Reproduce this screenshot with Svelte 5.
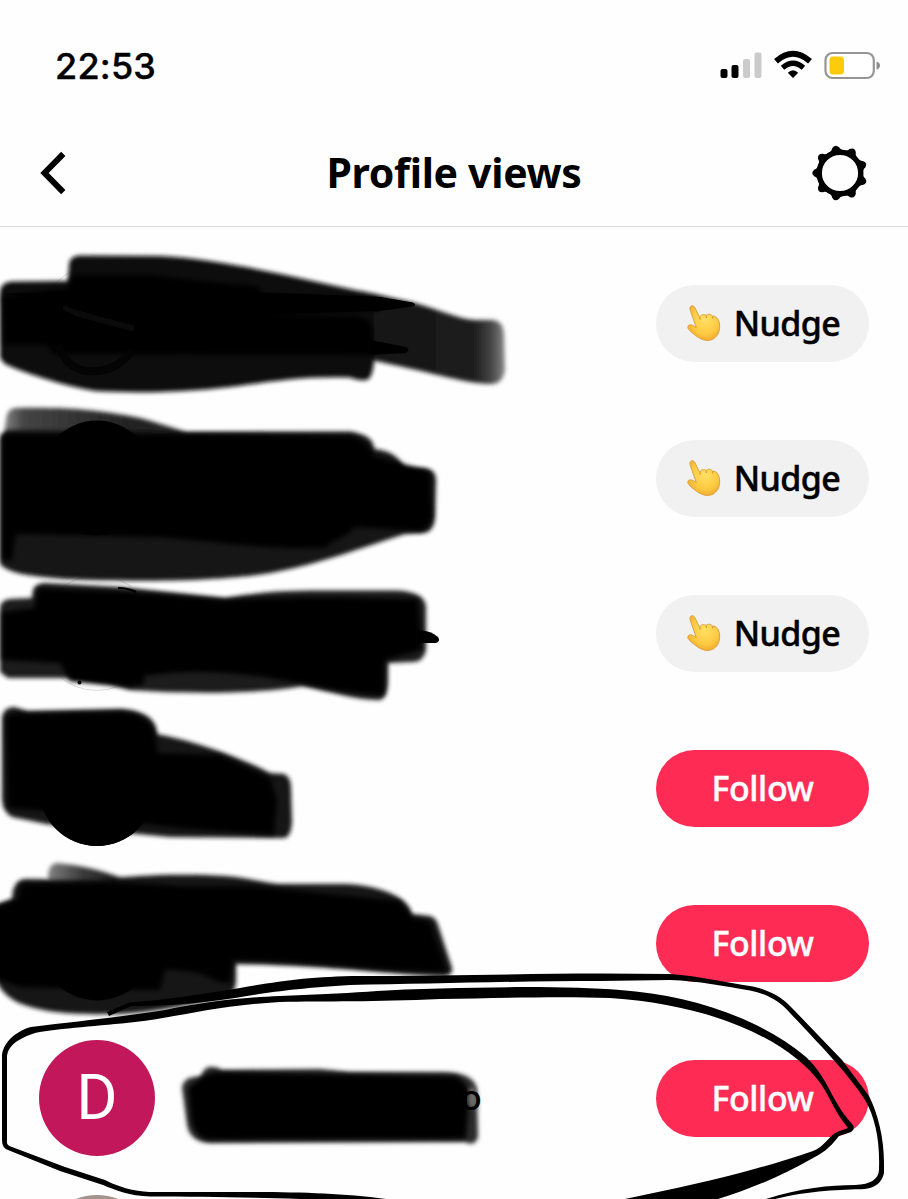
<script>
const rows = [
    { action: 'Nudge', avatar: 'pale' },
    { action: 'Nudge', avatar: 'dark' },
    { action: 'Nudge', avatar: 'pale' },
    { action: 'Follow', avatar: 'dark' },
    { action: 'Follow', avatar: 'dark' },
    { action: 'Follow', avatar: 'letter', initial: 'D', name: 'o' },
    { action: '', avatar: 'photo' }
];
const teeth = [0, 40, 80, 120, 160, 200, 240, 280, 320];
</script>

<div class="screen">
    <div class="status">
        <div class="clock">22:53</div>
        <svg class="status_icons" width="161" height="30" viewBox="0 0 161 30">
            <rect x="1.500" y="19" width="7" height="9" rx="2" fill="#000" />
            <rect x="12.500" y="15" width="7" height="13" rx="2" fill="#000" />
            <rect x="24" y="9" width="7" height="19" rx="2" fill="#cbcbcb" />
            <rect x="35.500" y="2.500" width="7" height="25.500" rx="2" fill="#cbcbcb" />
            <path d="M57 11.200Q74 -3.600 91 11.200" fill="none" stroke="#000" stroke-width="5.800" />
            <path d="M63.500 17.800Q74 8.600 84.500 17.800" fill="none" stroke="#000" stroke-width="5.200" />
            <path d="M68.800 22.800Q74 17.800 79.200 22.800L74 28Z" fill="#000" />
            <rect x="106.500" y="3" width="48.300" height="25" rx="7" fill="#fff" stroke="#959595" stroke-width="2.200" />
            <rect x="110.500" y="6.500" width="14.500" height="18" rx="3.500" fill="#fecb0b" />
            <path d="M157.500 11.500Q161 12.500 161 15.500T157.500 19.500Z" fill="#8d8d8d" />
        </svg>
    </div>
    <div class="header">
        <svg width="26" height="44" viewBox="0 0 26 44">
            <path d="M23.300 2.800L4.500 22L23.300 41.200" fill="none" stroke="#000" stroke-width="6" />
        </svg>
        <div class="title">Profile views</div>
        <svg width="58" height="58" viewBox="-29 -29 58 58">
            <circle r="20.800" fill="none" stroke="#000" stroke-width="5.400" />
            {#each teeth as angle}
            <path d="M-21 -8.500Q-23 -4 -25.500 -3.600Q-30 0 -25.500 3.600Q-23 4 -21 8.500Z" transform="rotate({angle})" />
            {/each}
        </svg>
    </div>
    <div class="list">
        {#each rows as row}
        <div class="row">
            <div class="avatar {row.avatar}">{row.initial ?? ''}</div>
            <div class="name">{row.name ?? ''}</div>
            {#if row.action === 'Nudge'}
            <button class="pill nudge">
                <svg class="hand" width="37" height="39" viewBox="0 0 37 39">
                    <defs>
                        <radialGradient id="skin" cx="0.55" cy="0.4" r="0.65">
                            <stop offset="0" stop-color="#ffe063" />
                            <stop offset="0.650" stop-color="#fdc941" />
                            <stop offset="1" stop-color="#f0a52c" />
                        </radialGradient>
                    </defs>
                    <path
                        d="M5 5.500C4.200 1.500 8.500 0.300 10 3.800L14.700 13.500C15.500 10.500 19 9.700 21 11.600C23 9.500 26 9.800 27.500 12.200C31 11.500 34 15.500 34.500 20C35 26 34 31 28.500 34.800C24 37.500 18 37 12 32.500C8.500 30 5 27.500 3.200 24.600C1.800 21.500 5 19.800 8.200 21.600L11.300 23.700Z"
                        fill="url(#skin)"
                        stroke="#dda33e"
                        stroke-width="1" />
                    <path d="M14.700 13.500L15.300 15.500M21 11.600L21.500 14M27.500 12.200L27.800 14.300" fill="none" stroke="#d99732" stroke-width="1.200" />
                </svg>
                <span>Nudge</span>
            </button>
            {:else if row.action}
            <button class="pill follow"><span>Follow</span></button>
            {/if}
        </div>
        {/each}
    </div>

    <!-- marker scribbles lying over the list -->
    <svg class="ink" width="908" height="1199" viewBox="0 0 908 1199">
        <defs>
            <filter id="soft" x="-5%" y="-10%" width="110%" height="120%"><feGaussianBlur stdDeviation="2" /></filter>
            <filter id="core" x="-5%" y="-10%" width="110%" height="120%"><feGaussianBlur stdDeviation="2.8" /></filter>
            <linearGradient id="tail" gradientUnits="userSpaceOnUse" x1="380" y1="0" x2="506" y2="0">
                <stop offset="0" stop-color="#131313" />
                <stop offset="0.750" stop-color="#1e1e1e" />
                <stop offset="0.880" stop-color="#444" />
                <stop offset="1" stop-color="#8c8c8c" />
            </linearGradient>
            <linearGradient id="edge" gradientUnits="userSpaceOnUse" x1="4" y1="0" x2="130" y2="0">
                <stop offset="0" stop-color="#858585" />
                <stop offset="0.150" stop-color="#454545" />
                <stop offset="1" stop-color="#222" />
            </linearGradient>
            <linearGradient id="flick" gradientUnits="userSpaceOnUse" x1="46" y1="0" x2="120" y2="0">
                <stop offset="0" stop-color="#858585" />
                <stop offset="0.500" stop-color="#3a3a3a" />
                <stop offset="1" stop-color="#181818" />
            </linearGradient>
        </defs>

        <g filter="url(#soft)">
            <path d="M300 300L360 291L415 303C440 310 459 319 474 320L493 320Q503 321 504 333L505 370Q503 384 491 384C468 384 438 374 376 361L300 350Z" fill="url(#tail)" />
            <path d="M0 290Q2 282 12 281.500L68 281L69 266Q69 256 80 255.500L160 256C225 259 295 278 375 294L415 304L374 312L374 362Q372 381 365 380Q360 381 350 377.500C300 376 270 382 230 387C180 393 130 393 95 391C60 385 22 372 5 364L0 358Z" fill="#101010" />
            <path d="M6 420Q7 408 16 408C70 407 100 410 140 418C165 425 185 432 205 437L180 465L0 460Z" fill="url(#edge)" />
            <path d="M0 438L6 429L185 432L350 431.500Q374 435 374 449Q397 451 404 468L423 468Q436 469 436 480L435 517Q434 532 423 533L405 534C360 548 325 562 280 571C230 582 130 582 65 579C35 576 10 575 0 564Z" fill="#141414" />
            <path d="M0 606Q2 600 10 599L32 598L33 590Q36 583 45 583L120 587L225 598C260 592 285 590.500 320 590.500L395 590.500Q424 591 426 606L426 650Q423 663 412 662L388 663L388 684Q386 701 378 700C355 700 325 690 302 686C265 694 180 694 130 690L108 683L68 678L8 678L0 672Z" fill="#1c1c1c" />
            <path d="M2 717Q4 707 14 707L28 711L120 709C145 710 157 720 157 734C190 740 235 755 270 773L284 774Q291 777 291 788L292 822Q291 838 283 838L170 837L95 830L46 824L12 817Q3 812 2 800Z" fill="#161616" />
            <path d="M48 878Q48 864 57 863C80 865 100 870 122 878L110 898L52 895Z" fill="url(#flick)" />
            <path d="M-6 905L12 899L13 890Q17 879 25 879L100 880C140 874 190 874 225 876C250 878 265 883 280 884L345 884C375 885 408 895 412 914L430 916Q436 918 438 925L452 968Q453 976 444 976C385 974 335 965 236 964L236 982Q235 995 225 997C180 1007 145 1014 110 1014C65 1015 35 1011 15 1001Q-1 992 -6 975Z" fill="#181818" />
            <path d="M182 1088Q183 1078 194 1077L201 1076Q205 1065 213 1067Q218 1067 222 1070L320 1069L350 1072L445 1072Q475 1073 477 1090L478 1137Q475 1147 465 1142L210 1143Q190 1142 187 1125Z" fill="#2b2b2b" />
        </g>

        <g filter="url(#core)">
            <path d="M2 296L68 288L72 275L150 275C200 280 225 285 254 285Q262 287 262 296L380 299L380 310L265 316L355 316Q371 317 372 328L373 355L52 354L48 345L4 345L3 306Z" />
            <path d="M2 434L200 434L350 436Q368 440 374 456L400 463L430 472L432 515Q430 529 420 531L355 527L348 534L332 542L325 548C250 550 190 537 145 537L16 534L12 560L2 560Z" />
            <path d="M2 612L34 608L38 588L130 592L225 600C290 596 360 597 418 599L422 650L385 660L384 695C350 695 310 684 280 680C230 670 180 670 144 676L144 684L130 687L70 681L60 663L2 660Z" />
            <path d="M6 719Q12 711 25 714L120 712Q150 714 155 735L158 753L220 755L270 778L277 800L274 835L180 828L110 820L46 811L8 808Z" />
            <path d="M-6 908L18 899L21 884L110 882L180 886L250 886L320 893L400 901L412 918L430 922L447 972C380 972 320 962 233 960L230 984L216 981Q200 970 165 970L160 990L130 990L20 987L-6 978Z" />
            <path d="M188 1088L205 1075L215 1072L455 1076Q470 1083 469 1098L466 1139L212 1140Q194 1140 191 1118Z" />
        </g>
        <ellipse cx="472.500" cy="1098" rx="5" ry="11" fill="#6a6a6a" filter="url(#soft)" />

        <path d="M5 294C130 290 220 290 380 297L413 302.500Q417 305 413 306.500L380 311L250 314L100 304Z" />
        <path d="M370 340L406 347Q411 350 406 353L370 355Z" />
        <path d="M418 630Q432 631 438 637Q441 641 436 643L418 643Z" />
        <path d="M63 307L76 313L135 329" fill="none" stroke="#181818" stroke-width="3" filter="url(#soft)" />
        <path d="M58 345Q66 367 85 371Q116 374 132 350" fill="none" stroke="#040404" stroke-width="8" />
        <circle cx="97" cy="478" r="57.500" />
        <circle cx="97" cy="788" r="58" />
        <circle cx="97" cy="943" r="57.500" />
        <circle cx="79.500" cy="682.500" r="2" />
        <path d="M118 588Q128 588 136 592" fill="none" stroke="#000" stroke-width="2" />

        <!-- upper loop -->
        <path d="M107 1012L129 1002.500C165 1000 210 993 240 988C280 981 310 976.500 360 976C450 976 530 973.500 600 973.500L670 974C700 976 727 983 753 986.500C773 991 784 999 794 1010L842 1060L869 1096C878 1114 884 1138 884 1163L884 1173Q881 1187 865 1189C840 1190 812 1190 775 1199L766 1199C800 1188 830 1185 855 1185Q879 1184 879 1169C880 1140 875 1117 865 1100C850 1076 824 1049 790 1013C780 1001 767 994 750 990.500C722 986 700 981 670 980L600 981C510 981 430 984 350 985C300 988 270 992 235 998C195 1004 165 1006 131 1006L109 1016Z" />
        <!-- lower loop -->
        <path d="M31 1027C80 1021 120 1017 165 1010C205 1002 235 998 280 996C345 994 395 989 440 988.500C520 986 580 987 620 990C690 995 760 1018 806 1057C830 1080 830 1100 853 1125Q855 1130 851 1132L839 1136C828 1150 822 1153 813 1158C780 1177 750 1189 718 1199L625 1199C690 1186 755 1171 813 1151C824 1147 829 1136 837 1132L848 1128C834 1111 831 1099 821 1084C790 1041 715 1005 610 998C560 996 500 998 440 999C375 1002 325 1001 280 1002C215 1006 185 1016 135 1022C100 1026 60 1028 35 1033C20 1038 7 1045 7 1058L7 1140Q6 1146 12 1147L65 1167L105 1180C125 1190 140 1192 155 1192L240 1192C300 1192 340 1193 386 1199L300 1199C240 1197 200 1197 150 1196.500C130 1196 115 1190 103 1185L60 1171L8 1150Q2 1148 2 1140L2 1057C2 1043 16 1031 31 1027Z" />
    </svg>
</div>

<style>
:global(body){
    background: #fff;
}
.screen{
    position: relative;
    width: 908px;
    height: 1199px;
    overflow: hidden;
    background: #fefefe;
    color: #000;
    font-family: "Noto Sans", sans-serif;
}
.status{
    height: 120px;
    box-sizing: border-box;
    padding: 46px 28px 0 55px;
    display: flex;
    justify-content: space-between;
    align-items: flex-start;
}
.clock{
    font-family: Inter, sans-serif;
    font-size: 36px;
    line-height: 40px;
    font-weight: 500;
    letter-spacing: 0.2px;
    -webkit-text-stroke: 0.4px #000;
}
.status_icons{
    margin-top: 4px;
}
.header{
    height: 107px;
    box-sizing: border-box;
    padding: 0 39px 0 40px;
    border-bottom: 1px solid #dcdcdc;
    display: flex;
    justify-content: space-between;
    align-items: center;
}
.title{
    font-size: 41px;
    font-weight: 700;
    line-height: 60px;
    margin: -3px 0 0 31px;
    letter-spacing: -0.3px;
}
.list{
    padding-top: 19px;
}
.row{
    height: 155px;
    box-sizing: border-box;
    padding: 0 39px;
    display: flex;
    align-items: center;
}
.avatar{
    width: 116px;
    height: 116px;
    margin-bottom: 2px;
    border-radius: 50%;
    flex: none;
    display: flex;
    justify-content: center;
    align-items: center;
}
.dark{
    background: #050505;
}
.pale{
    box-sizing: border-box;
    border: 1px solid #ddd;
}
.letter{
    background: #c2185b;
    color: #fff;
    font-family: Roboto, sans-serif;
    font-size: 63px;
}
.photo{
    background: #a2938d;
}
.name{
    position: relative;
    z-index: 1;
    flex: none;
    width: 327px;
    margin-bottom: 4px;
    font-size: 35px;
    font-weight: 500;
    text-align: right;
}
.pill{
    width: 213px;
    height: 77px;
    margin: 0 0 0 auto;
    padding: 0;
    border: 0;
    border-radius: 39px;
    display: flex;
    justify-content: center;
    align-items: center;
    font-family: inherit;
    font-size: 34px;
    font-weight: 500;
}
.pill span{
    margin-bottom: 2px;
}
.nudge{
    background: #f1f1f1;
    color: #000;
    gap: 12px;
}
.nudge span{
    letter-spacing: -0.6px;
    -webkit-text-stroke: 0.5px #000;
}
.follow{
    background: #fe2c55;
    color: #fff;
}
.follow span{
    letter-spacing: -0.4px;
    -webkit-text-stroke: 0.4px #fff;
}
.ink{
    position: absolute;
    top: 0;
    left: 0;
    pointer-events: none;
}
</style>
